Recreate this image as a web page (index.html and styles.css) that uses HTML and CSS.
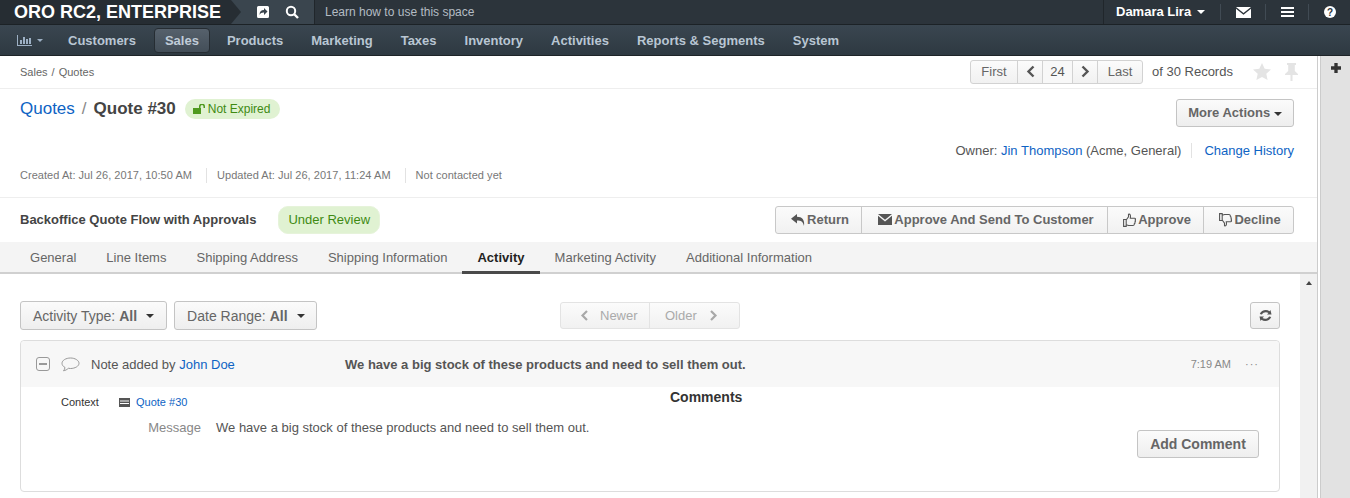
FILE: index.html
```html
<!DOCTYPE html>
<html lang="en">
<head>
<meta charset="utf-8">
<title>Quote #30</title>
<link rel="stylesheet" href="styles.css">
</head>
<body>
<header class="top">
  <div class="logo">ORO RC2, ENTERPRISE</div>
  <div class="quick">
    <svg class="qi" viewBox="0 0 14 14" width="14" height="14"><path fill="#fff" fill-rule="evenodd" d="M2.500 1h9A1.500 1.500 0 0 1 13 2.500v9a1.500 1.500 0 0 1-1.500 1.500h-9A1.500 1.500 0 0 1 1 11.500v-9A1.500 1.500 0 0 1 2.500 1zM8 3v2C5 5 3.500 6.500 3.500 10c1-1.800 2.500-2.500 4.500-2.400V10l3.500-3.500z"/></svg>
    <svg class="qi" viewBox="0 0 14 14" width="14" height="14"><circle cx="6" cy="6" r="4.200" fill="none" stroke="#fff" stroke-width="2"/><path d="M9 9l4 4" stroke="#fff" stroke-width="2.400"/></svg>
  </div>
  <div class="learn">Learn how to use this space</div>
  <div class="user">
    <div class="uname">Damara Lira <i class="caret white"></i></div>
    <div class="ubtn w45"><svg viewBox="0 0 15 11" width="15" height="11"><path fill="#fff" d="M0 0h15L7.500 6zM0 1.800l7.500 6 7.500-6V11H0z"/></svg></div>
    <div class="ubtn w43"><svg viewBox="0 0 13 10" width="13" height="10"><path fill="#fff" d="M0 0h13v2H0zM0 4h13v2H0zM0 8h13v2H0z"/></svg></div>
    <div class="ubtn w42"><svg viewBox="0 0 12 12" width="12" height="12"><circle cx="6" cy="6" r="6" fill="#fff"/><text x="6" y="9.500" class="qm">?</text></svg></div>
  </div>
</header>
<nav class="nav">
  <div class="dash">
    <svg viewBox="0 0 15 11" width="15" height="11"><path fill="#9db0c4" d="M0 0h1v11H0zM1 10h14v1H1zM3 5h2v4H3zM6 2h2v7H6zM9 4h2v5H9zM12 3h2v6h-2z"/></svg>
    <i class="caret nav-caret"></i>
  </div>
  <a class="ni">Customers</a>
  <a class="ni active">Sales</a>
  <a class="ni">Products</a>
  <a class="ni">Marketing</a>
  <a class="ni">Taxes</a>
  <a class="ni">Inventory</a>
  <a class="ni">Activities</a>
  <a class="ni">Reports &amp; Segments</a>
  <a class="ni">System</a>
</nav>
<div class="shell">
  <main class="page">
    <div class="crumbs">
      <div class="crumb-text">Sales / Quotes</div>
      <div class="pager">
        <div class="group">
          <span class="gb">First</span>
          <span class="gb ch"><svg viewBox="0 0 9 13" width="9" height="13"><path d="M7.500 1.500L2.500 6.500l5 5" fill="none" stroke="#555" stroke-width="2.400"/></svg></span>
          <span class="gb cur">24</span>
          <span class="gb ch"><svg viewBox="0 0 9 13" width="9" height="13"><path d="M1.500 1.500l5 5-5 5" fill="none" stroke="#555" stroke-width="2.400"/></svg></span>
          <span class="gb">Last</span>
        </div>
        <span class="records">of 30 Records</span>
        <svg class="star" viewBox="0 0 18 17" width="18" height="17"><path fill="#e4e4e4" d="M9 0l2.700 5.800 6.300.7-4.700 4.200 1.300 6.300L9 13.900 3.400 17l1.300-6.300L0 6.500l6.300-.7z"/></svg>
        <svg class="pin" viewBox="0 0 13 18" width="13" height="18"><path fill="#e4e4e4" d="M2 0h9v2H9.800v6l3.200 3v1H7.500v6h-2v-6H0v-1l3.200-3V2H2z"/></svg>
      </div>
    </div>
    <div class="head">
      <div class="title-row">
        <div class="title"><a class="lnk">Quotes</a><span class="sep">/</span><b>Quote #30</b></div>
        <span class="pill-exp"><svg viewBox="0 0 13 10" width="13" height="10"><path fill="#4f9a1f" d="M0 4h8v6H0zM6 4V2.500a3 3 0 0 1 6 0V4h-1.500V2.500a1.500 1.500 0 0 0-3 0V4z"/></svg>Not Expired</span>
        <button class="btn more">More Actions <i class="caret dark small"></i></button>
      </div>
      <div class="owner-row">
        <span>Owner: <a class="lnk">Jin Thompson</a> (Acme, General)</span>
        <a class="lnk hist">Change History</a>
      </div>
      <div class="meta">
        <span>Created At: Jul 26, 2017, 10:50 AM</span>
        <span>Updated At: Jul 26, 2017, 11:24 AM</span>
        <span>Not contacted yet</span>
      </div>
    </div>
    <div class="flow">
      <b class="flow-name">Backoffice Quote Flow with Approvals</b>
      <span class="pill-review">Under Review</span>
      <div class="group actions">
        <span class="gb act w-return"><svg viewBox="0 0 14 12" width="14" height="12"><path fill="#555" d="M6 0L0 4.800 6 9.500V6.500c4 0 6 1 7 5.500C14 6 11 2.800 6 2.800z"/></svg>Return</span>
        <span class="gb act w-send"><svg viewBox="0 0 14 11" width="14" height="11"><path fill="#555" d="M0 0h14L7 5.800zM0 1.800l7 5.700 7-5.700V11H0z"/></svg>Approve And Send To Customer</span>
        <span class="gb act w-appr"><svg viewBox="0 0 13 14" width="13" height="14"><path fill="none" stroke="#555" stroke-width="1.100" d="M.6 6.500h2.600v6.900H.6zM3.200 7l2.300-3.200V1.200c1.700-.5 2.300 1 1.800 4h4.300c1 0 1.200 1.200.5 1.800.6.700.4 1.500-.2 1.900.3.800 0 1.500-.6 1.800.1 1-.4 1.800-1.400 1.800H5.500l-2.300-.8"/></svg>Approve</span>
        <span class="gb act w-decl"><svg viewBox="0 0 13 14" width="13" height="14"><path fill="none" stroke="#555" stroke-width="1.100" d="M.6.600h2.600v6.900H.6zM3.200 7l2.300 3.200v2.600c1.700.5 2.300-1 1.800-4h4.300c1 0 1.200-1.200.5-1.800.6-.7.400-1.500-.2-1.900.3-.8 0-1.500-.6-1.800.1-1-.4-1.800-1.400-1.800H5.500l-2.300.8"/></svg>Decline</span>
      </div>
    </div>
    <div class="tabs">
      <a class="tab">General</a>
      <a class="tab">Line Items</a>
      <a class="tab">Shipping Address</a>
      <a class="tab">Shipping Information</a>
      <a class="tab on">Activity</a>
      <a class="tab">Marketing Activity</a>
      <a class="tab">Additional Information</a>
    </div>
    <div class="scroller">
      <section class="panel">
        <div class="filters">
          <div class="fl-left">
            <button class="btn filter">Activity Type: <b>All</b><i class="caret dark"></i></button>
            <button class="btn filter">Date Range: <b>All</b><i class="caret dark"></i></button>
          </div>
          <div class="group paging">
            <span class="gb pg newer"><svg viewBox="0 0 9 13" width="9" height="13"><path d="M7 2L2.500 6.500 7 11" fill="none" stroke="#a8a8a8" stroke-width="2.200"/></svg>Newer</span>
            <span class="gb pg older">Older<svg viewBox="0 0 9 13" width="9" height="13"><path d="M2 2l4.500 4.500L2 11" fill="none" stroke="#a8a8a8" stroke-width="2.200"/></svg></span>
          </div>
          <button class="btn refresh"><svg viewBox="0 0 13 13" width="13" height="13"><path fill="#555" d="M11.500 1l1 4.500H8l1.500-1.500C7.500 2.600 4.200 3 2.900 5.500L.8 5C2.300 1 7.300-.2 10.500 2.200zM1.500 12L.5 7.500H5L3.500 9c2 1.400 5.300 1 6.600-1.500l2.100.5c-1.500 4-6.500 5.200-9.700 2.800z"/></svg></button>
        </div>
        <article class="note">
          <div class="note-head">
            <span class="toggle"></span>
            <svg class="bubble" viewBox="0 0 19 15" width="19" height="15"><path fill="none" stroke="#999" d="M9.500 1C5 1 1 3.300 1 6.300c0 1.700 1.200 3.200 3 4.200-.2 1.400-.8 2.500-1.500 3.300 1.800-.3 3.700-1.300 4.800-2.500.7.100 1.400.2 2.200.2 4.500 0 8.500-2.300 8.500-5.200S14 1 9.500 1z"/></svg>
            <span class="added">Note added by <a class="lnk">John Doe</a></span>
            <b class="note-msg">We have a big stock of these products and need to sell them out.</b>
            <span class="time">7:19 AM</span>
            <span class="dots">···</span>
          </div>
          <div class="note-body">
            <div class="note-left">
              <div class="context">
                <span class="ctx-label">Context</span>
                <svg viewBox="0 0 11 9" width="11" height="9"><path fill="#555" fill-rule="evenodd" d="M0 0h11v9H0zM1 2.500v1h9v-1zM1 5v1h9V5z"/></svg>
                <a class="lnk ctx-link">Quote #30</a>
              </div>
              <div class="message"><span class="msg-label">Message</span><span class="msg-text">We have a big stock of these products and need to sell them out.</span></div>
            </div>
            <div class="comments">
              <h4>Comments</h4>
              <button class="btn add">Add Comment</button>
            </div>
          </div>
        </article>
      </section>
      <div class="track"><i class="up"></i></div>
    </div>
  </main>
  <aside class="side"><svg viewBox="0 0 9 9" width="10" height="10"><path fill="#333" d="M3 0h3v3h3v3H6v3H3V6H0V3h3z"/></svg></aside>
</div>
</body>
</html>
```
FILE: styles.css
```css
* { box-sizing: border-box; }
html, body { margin: 0; height: 498px; overflow: hidden; }
body { font-family: "Liberation Sans", Arial, sans-serif; font-size: 13px; color: #444; background: #fff; }
a { text-decoration: none; }
.lnk { color: #0e63c4; }
.caret { display: inline-block; width: 0; height: 0; border-left: 4px solid transparent; border-right: 4px solid transparent; border-top: 4px solid #333; }
.caret.white { border-top-color: #fff; margin-left: 2px; vertical-align: 2px; }
.caret.small { vertical-align: 1px; }
.caret.nav-caret { border-top-color: #9db0c4; border-left-width: 3px; border-right-width: 3px; border-top-width: 3px; margin-left: 5px; }

.top { display: flex; height: 25px; background: #2c343b; border-bottom: 1px solid #1c2226; color: #fff; }
.logo { position: relative; width: 231px; padding-left: 14px; font-size: 18px; font-weight: bold; line-height: 24px; white-space: nowrap; background: #262d33; }
.logo::after { content: ""; position: absolute; top: 0; left: 231px; width: 0; height: 0; border-top: 12px solid transparent; border-bottom: 12px solid transparent; border-left: 10px solid #262d33; }
.quick { display: flex; align-items: center; gap: 15px; width: 84px; padding-left: 25px; background: #3a454e; border-right: 1px solid #20262b; }
.learn { flex: 1; padding-left: 10px; font-size: 12px; line-height: 24px; color: #b4bcc3; }
.user { display: flex; align-items: center; border-left: 1px solid #20262b; padding-left: 12px; }
.uname { font-size: 13px; font-weight: bold; width: 104px; line-height: 16px; white-space: nowrap; }
.ubtn { display: flex; align-items: center; justify-content: center; height: 16px; border-left: 1px solid #414b54; }
.w45 { width: 45px; }
.w43 { width: 43px; }
.w42 { width: 42px; }
.qm { font: bold 10px "Liberation Sans", sans-serif; text-anchor: middle; fill: #2c343b; }

.nav { display: flex; align-items: center; height: 31px; background: linear-gradient(#3a4650, #2e3941); border-bottom: 1px solid #1e2428; }
.dash { display: flex; align-items: center; width: 54px; padding-left: 17px; }
.ni { padding: 0 13px; font-size: 13px; font-weight: bold; line-height: 23px; color: #b9c6d3; border: 1px solid transparent; border-radius: 4px; white-space: nowrap; }
.ni.active { padding: 0 10px; margin: 0 3px 0 4px; height: 25px; background: linear-gradient(#56616c, #434e58); border-color: #262d33; color: #c0ccd8; }

.shell { display: flex; height: 442px; }
.page { display: flex; flex-direction: column; width: 1318px; flex: none; border-right: 1px solid #ccc; }
.side { flex: 1; display: flex; justify-content: center; align-items: flex-start; padding-top: 7px; background: #e2e2e2; border-left: 1px solid #ccc; margin-left: 2px; }

.crumbs { display: flex; justify-content: space-between; align-items: center; height: 33px; padding: 0 19px 1px 20px; border-bottom: 1px solid #eee; }
.crumb-text { font-size: 11px; color: #666; word-spacing: 1px; padding-top: 1px; }
.pager { display: flex; align-items: center; }
.group { display: inline-flex; border: 1px solid #d2d2d2; border-radius: 3px; background: linear-gradient(#fbfbfb, #f1f1f1); }
.gb { display: flex; align-items: center; justify-content: center; color: #666; border-left: 1px solid #d2d2d2; height: 22px; width: 38px; }
.gb:first-child { border-left: 0; }
.pager .gb { font-size: 13px; }
.pager .gb:first-child { width: 46px; }
.pager .gb.ch { width: 25px; }
.pager .gb.cur { width: 30px; background: #f8f8f8; color: #555; }
.pager .gb:last-child { width: 45px; }
.records { margin-left: 9px; width: 101px; color: #555; white-space: nowrap; }
.star { margin-right: 14px; }

.head { height: 109px; padding: 0 23px 0 20px; border-bottom: 1px solid #eee; }
.title-row { display: flex; align-items: center; height: 39px; }
.title { font-size: 17px; color: #444; }
.sep { margin: 0 7px; color: #888; }
.pill-exp { display: flex; align-items: center; gap: 2px; height: 20px; margin-left: 9px; padding: 0 10px 0 8px; border-radius: 10px; background: #e0f2d2; color: #3f8a12; font-size: 12px; }
.btn { font-family: inherit; border: 1px solid #c4c4c4; border-radius: 3px; background: linear-gradient(#fbfbfb, #eeeeee); color: #666; padding: 0; }
.more { align-self: flex-end; margin: 0 0 1px auto; padding-bottom: 2px; width: 118px; height: 28px; font-size: 13px; font-weight: bold; }
.owner-row { display: flex; justify-content: flex-end; align-items: center; height: 18px; margin-top: 13px; font-size: 13px; color: #555; }
.hist { margin-left: 10px; padding-left: 12px; border-left: 1px solid #e2e2e2; line-height: 15px; }
.meta { display: flex; margin-top: 9px; font-size: 11px; color: #777; letter-spacing: .04px; }
.meta span { padding: 0 14px 0 10px; border-left: 1px solid #e2e2e2; line-height: 15px; }
.meta span:first-child { padding-left: 0; border-left: 0; }

.flow { display: flex; align-items: center; height: 44px; padding: 0 23px 1px 20px; }
.flow-name { font-size: 13px; color: #444; }
.pill-review { display: flex; align-items: center; height: 28px; margin-left: 22px; padding: 0 9px; border-radius: 10px; background: #e0f2d2; color: #3f8a12; font-size: 13px; border: 1px solid #e6f3da; }
.actions { margin-left: auto; border-color: #c8c8c8; }
.gb.act { height: 26px; gap: 2px; padding-left: 3px; font-size: 13px; font-weight: bold; border-left-color: #c8c8c8; }
.w-return { width: 85px; }
.w-send { width: 246px; }
.w-appr { width: 96px; }
.w-decl { width: 90px; }

.tabs { display: flex; height: 32px; padding-left: 15px; background: #f4f4f4; border-bottom: 2px solid #d0d0d0; }
.tab { height: 32px; padding: 0 15px; line-height: 31px; color: #666; font-size: 13px; letter-spacing: .015px; }
.tab.on { color: #222; font-weight: bold; border-bottom: 3px solid #4a4a4a; }

.scroller { flex: 1; display: flex; min-height: 0; }
.panel { flex: 1; padding: 0 20px; overflow: hidden; }
.track { width: 17px; background: #f1f1f1; padding-top: 7px; display: flex; justify-content: center; align-items: flex-start; }
.up { width: 0; height: 0; border-left: 3.500px solid transparent; border-right: 3.500px solid transparent; border-bottom: 4px solid #444; }

.filters { display: flex; align-items: center; height: 66px; padding-top: 27px; padding-bottom: 10px; }
.fl-left { display: flex; gap: 7px; width: 540px; }
.filter { display: flex; align-items: center; height: 29px; padding: 0 12px; font-size: 14px; }
.filter + .filter { padding-right: 11px; }
.filter b { margin-left: 4px; }
.filter .caret { margin-left: 9px; }
.paging { height: 27px; border-color: #e3e3e3; }
.gb.pg { height: 25px; justify-content: flex-start; color: #aaa; font-size: 13px; border-left-color: #e3e3e3; }
.newer { width: 88px; gap: 11px; padding-left: 19px; }
.older { width: 90px; gap: 12px; padding-left: 15px; }
.refresh { display: flex; align-items: center; justify-content: center; margin-left: auto; width: 30px; height: 27px; }

.note { border: 1px solid #ddd; border-radius: 4px; height: 152px; }
.note-head { display: flex; align-items: center; height: 46px; background: #f7f7f7; padding-left: 15px; border-radius: 4px 4px 0 0; }
.toggle { position: relative; width: 14px; height: 14px; border: 1px solid #999; border-radius: 3px; }
.toggle::after { content: ""; position: absolute; left: 2px; right: 2px; top: 5px; height: 2px; background: #999; }
.bubble { margin-left: 11px; }
.added { width: 254px; margin-left: 11px; font-size: 13px; color: #555; }
.note-msg { flex: 1; font-size: 13px; color: #555; }
.time { font-size: 11px; color: #888; padding-left: 1px; }
.dots { width: 48px; text-align: right; padding-right: 20px; color: #888; font-size: 11px; letter-spacing: 1px; }
.note-body { display: flex; }
.note-left { width: 630px; }
.context { display: flex; align-items: center; height: 14px; margin: 8px 0 0 40px; font-size: 11px; }
.ctx-label { width: 58px; color: #333; }
.ctx-link { margin-left: 6px; }
.message { display: flex; margin-top: 11px; font-size: 13px; }
.msg-label { width: 180px; text-align: right; color: #888; }
.msg-text { margin-left: 15px; color: #555; white-space: nowrap; }
.comments { flex: 1; position: relative; }
.comments h4 { margin: 2px 0 0; font-size: 14px; color: #333; text-align: left; padding-left: 19px; }
.add { position: absolute; top: 43px; right: 20px; width: 122px; height: 28px; font-size: 14px; font-weight: bold; }
```
